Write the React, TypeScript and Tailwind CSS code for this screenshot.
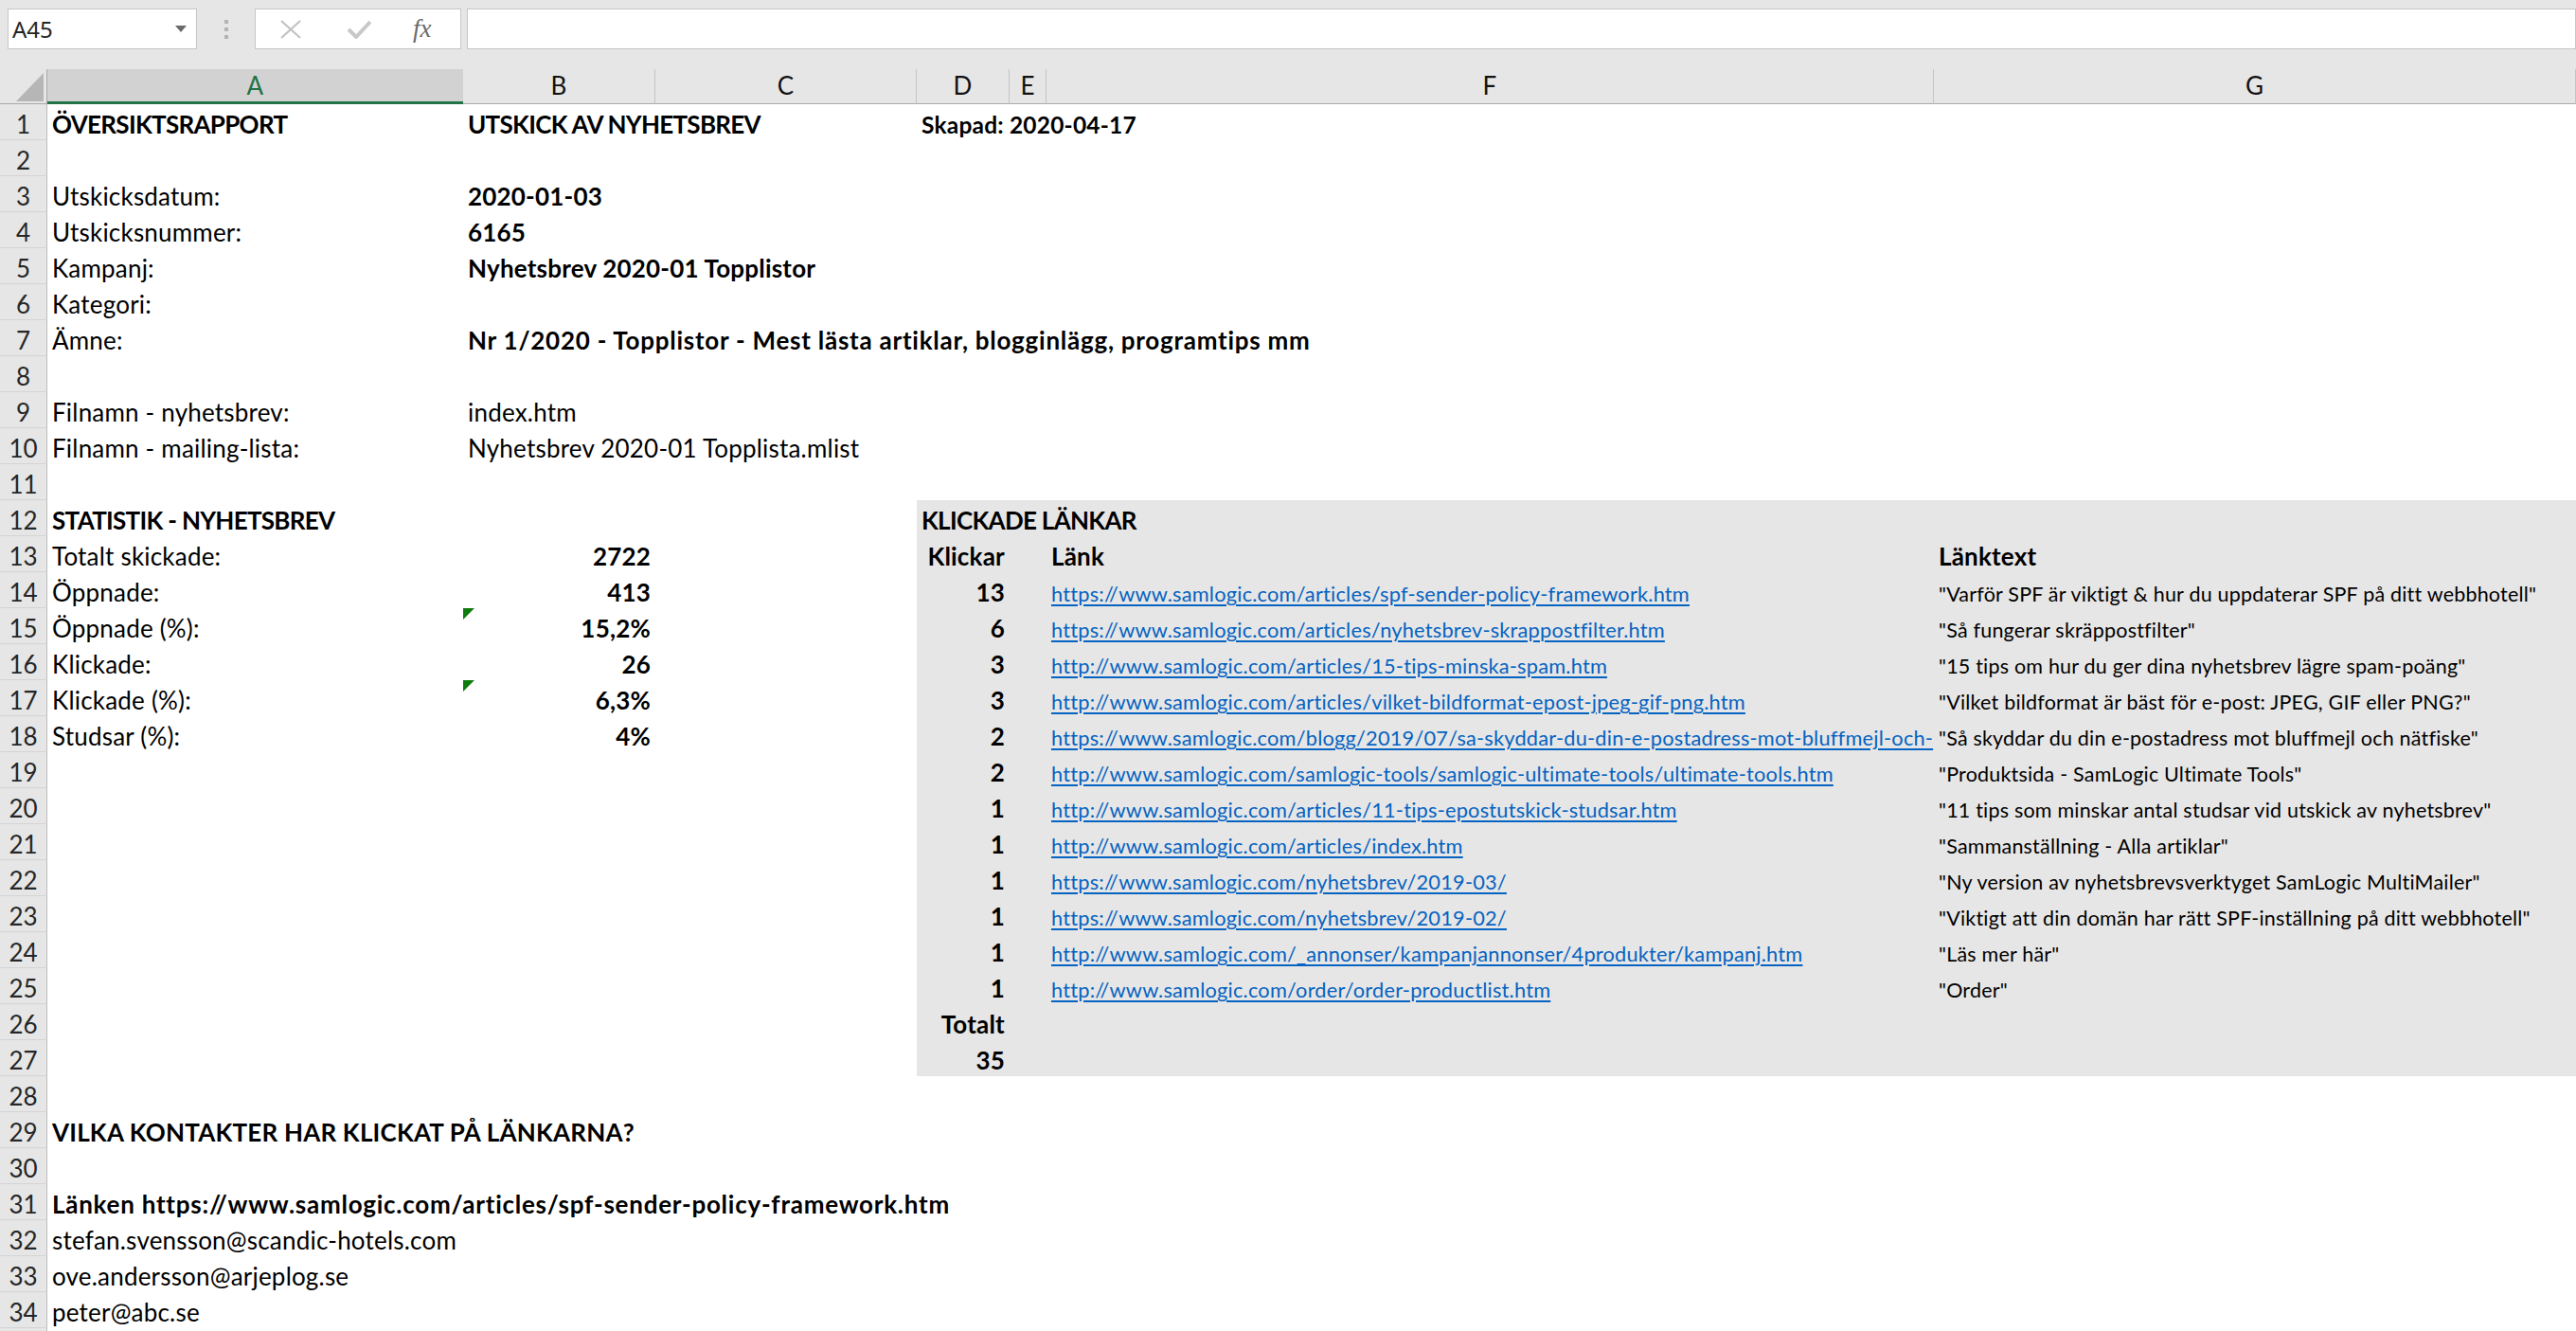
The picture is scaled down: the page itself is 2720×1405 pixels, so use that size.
import clsx from "clsx";

type C = { t: string; b?: boolean; r?: boolean; link?: boolean; sm?: boolean; xs?: boolean; caps?: boolean; wide?: boolean };
type R = { a?: C; b?: C; d?: C; f?: C; g?: C; gray?: boolean; mark?: boolean };

const links: [number, string, string][] = [
  [13, "https://www.samlogic.com/articles/spf-sender-policy-framework.htm", "Varför SPF är viktigt & hur du uppdaterar SPF på ditt webbhotell"],
  [6, "https://www.samlogic.com/articles/nyhetsbrev-skrappostfilter.htm", "Så fungerar skräppostfilter"],
  [3, "http://www.samlogic.com/articles/15-tips-minska-spam.htm", "15 tips om hur du ger dina nyhetsbrev lägre spam-poäng"],
  [3, "http://www.samlogic.com/articles/vilket-bildformat-epost-jpeg-gif-png.htm", "Vilket bildformat är bäst för e-post: JPEG, GIF eller PNG?"],
  [2, "https://www.samlogic.com/blogg/2019/07/sa-skyddar-du-din-e-postadress-mot-bluffmejl-och-", "Så skyddar du din e-postadress mot bluffmejl och nätfiske"],
  [2, "http://www.samlogic.com/samlogic-tools/samlogic-ultimate-tools/ultimate-tools.htm", "Produktsida - SamLogic Ultimate Tools"],
  [1, "http://www.samlogic.com/articles/11-tips-epostutskick-studsar.htm", "11 tips som minskar antal studsar vid utskick av nyhetsbrev"],
  [1, "http://www.samlogic.com/articles/index.htm", "Sammanställning - Alla artiklar"],
  [1, "https://www.samlogic.com/nyhetsbrev/2019-03/", "Ny version av nyhetsbrevsverktyget SamLogic MultiMailer"],
  [1, "https://www.samlogic.com/nyhetsbrev/2019-02/", "Viktigt att din domän har rätt SPF-inställning på ditt webbhotell"],
  [1, "http://www.samlogic.com/_annonser/kampanjannonser/4produkter/kampanj.htm", "Läs mer här"],
  [1, "http://www.samlogic.com/order/order-productlist.htm", "Order"],
];

const stats: [string, string, boolean][] = [
  ["Totalt skickade:", "2722", false],
  ["Öppnade:", "413", false],
  ["Öppnade (%):", "15,2%", true],
  ["Klickade:", "26", false],
  ["Klickade (%):", "6,3%", true],
  ["Studsar (%):", "4%", false],
];

const rows: R[] = [
  {
    a: { t: "ÖVERSIKTSRAPPORT", b: true, caps: true },
    b: { t: "UTSKICK AV NYHETSBREV", b: true, caps: true },
    d: { t: "Skapad: 2020-04-17", b: true, sm: true },
  },
  {},
  { a: { t: "Utskicksdatum:" }, b: { t: "2020-01-03", b: true } },
  { a: { t: "Utskicksnummer:" }, b: { t: "6165", b: true } },
  { a: { t: "Kampanj:" }, b: { t: "Nyhetsbrev 2020-01 Topplistor", b: true } },
  { a: { t: "Kategori:" } },
  { a: { t: "Ämne:" }, b: { t: "Nr 1/2020 - Topplistor - Mest lästa artiklar, blogginlägg, programtips mm", b: true, wide: true } },
  {},
  { a: { t: "Filnamn - nyhetsbrev:" }, b: { t: "index.htm" } },
  { a: { t: "Filnamn - mailing-lista:" }, b: { t: "Nyhetsbrev 2020-01 Topplista.mlist" } },
  {},
  { a: { t: "STATISTIK - NYHETSBREV", b: true, caps: true }, d: { t: "KLICKADE LÄNKAR", b: true, caps: true }, gray: true },
];

// rows 13-27: stats on the left, clicked links on the right
const right: R[] = [
  { d: { t: "Klickar", b: true, r: true }, f: { t: "Länk", b: true }, g: { t: "Länktext", b: true } },
  ...links.map(([n, url, text]) => ({
    d: { t: String(n), b: true, r: true },
    f: { t: url, link: true },
    g: { t: `"${text}"`, xs: true },
  })),
  { d: { t: "Totalt", b: true, r: true } },
  { d: { t: "35", b: true, r: true } },
];
right.forEach((r, i) => {
  const s = stats[i];
  rows.push({
    ...r,
    a: s ? { t: s[0] } : undefined,
    b: s ? { t: s[1], b: true, r: true } : undefined,
    mark: s ? s[2] : false,
    gray: true,
  });
});

rows.push(
  {},
  { a: { t: "VILKA KONTAKTER HAR KLICKAT PÅ LÄNKARNA?", b: true } },
  {},
  { a: { t: "Länken https://www.samlogic.com/articles/spf-sender-policy-framework.htm", b: true, wide: true } },
  { a: { t: "stefan.svensson@scandic-hotels.com" } },
  { a: { t: "ove.andersson@arjeplog.se" } },
  { a: { t: "peter@abc.se" } },
  {},
  {}
);

function Cell({ c, w, gray, clip, mark }: { c?: C; w: string; gray?: boolean; clip?: boolean; mark?: boolean }) {
  return (
    <div
      className={clsx(
        "relative h-full shrink-0 whitespace-nowrap px-[5px]",
        w,
        gray && "bg-[#e7e6e6]",
        clip && "overflow-hidden",
        c?.r && "text-right"
      )}
    >
      {mark && <span className="absolute left-0 top-0 h-[12px] w-[12px] bg-[#0f7b0f] [clip-path:polygon(0_0,100%_0,0_100%)]" />}
      {c && (
        <span
          className={clsx(
            "relative top-[2px] z-10",
            c.b && "font-bold",
            c.caps && "tracking-[-0.7px]",
            c.wide && "tracking-[0.75px]",
            c.sm && "text-[24.5px]",
            c.xs && "text-[21.5px]",
            c.link && "text-[21.8px] text-[#0563c1] underline decoration-[#0563c1] decoration-[2px] underline-offset-[3px]"
          )}
        >
          {c.t}
        </span>
      )}
    </div>
  );
}

function Toolbar() {
  return (
    <div className="flex h-[73px] items-start bg-[#e6e6e6] pt-[9px] tracking-normal">
      <div className="ml-[8px] flex h-[43px] w-[200px] items-center border border-[#c6c6c6] bg-white pl-[4px] pr-[10px]">
        <span className="flex-1 font-['Noto_Sans',sans-serif] text-[24px] leading-none text-[#262626]">A45</span>
        <svg width="12" height="7" viewBox="0 0 12 7">
          <path d="M0 0h12L6 7z" fill="#6a6a6a" />
        </svg>
      </div>
      <div className="ml-[29px] mt-[12px] flex flex-col gap-[4px]">
        <span className="h-[4px] w-[4px] bg-[#b3b3b3]" />
        <span className="h-[4px] w-[4px] bg-[#b3b3b3]" />
        <span className="h-[4px] w-[4px] bg-[#b3b3b3]" />
      </div>
      <div className="ml-[28px] flex h-[43px] w-[218px] items-center border border-[#c6c6c6] bg-white">
        <svg className="ml-[26px]" width="22" height="20" viewBox="0 0 22 20">
          <path d="M1 1l20 18M21 1L1 19" stroke="#c2c2c2" strokeWidth="2.2" fill="none" />
        </svg>
        <svg className="ml-[49px]" width="25" height="20" viewBox="0 0 25 20">
          <path d="M1 10l8 8L24 2" stroke="#c8c8c8" strokeWidth="4" fill="none" />
        </svg>
        <span className="ml-[44px] font-['Liberation_Serif',serif] text-[27px] italic leading-none text-[#6b6b6b]">fx</span>
      </div>
      <div className="ml-[6px] h-[43px] flex-1 border border-[#c6c6c6] bg-white" />
    </div>
  );
}

const headers: [string, string][] = [
  ["A", "w-[439px]"],
  ["B", "w-[203px]"],
  ["C", "w-[276px]"],
  ["D", "w-[98px]"],
  ["E", "w-[39px]"],
  ["F", "w-[937px]"],
  ["G", "flex-1"],
];

function ColumnHeader() {
  return (
    <div className="flex h-[37px] bg-[#e6e6e6] leading-[35px]">
      <div className="relative w-[50px] shrink-0 border-b border-r border-[#a9a9a9]">
        <svg className="absolute left-0 top-0" width="50" height="37" viewBox="0 0 50 37">
          <path d="M46 4v30H17z" fill="#b6b6b6" />
        </svg>
      </div>
      {headers.map(([l, w]) =>
        l === "A" ? (
          <div key={l} className={clsx("shrink-0 border-b-[3px] border-[#217346] bg-[#d2d2d2] text-center text-[#217346]", w)}>
            {l}
          </div>
        ) : (
          <div key={l} className={clsx("shrink-0 border-b border-r border-b-[#a9a9a9] border-r-[#c4c4c4] text-center text-[#111]", w)}>
            {l}
          </div>
        )
      )}
    </div>
  );
}

export default function App() {
  return (
    <div className="h-[1405px] w-[2720px] overflow-hidden bg-white font-['Lato','Liberation_Sans',sans-serif] text-[26px] tracking-[0.2px] text-black">
      <Toolbar />
      <ColumnHeader />
      {rows.map((r, i) => (
        <div key={i} className="flex h-[38px] leading-[38px]">
          <div className="w-[50px] shrink-0 border-b border-r border-b-[#d4d4d4] border-r-[#bdbdbd] bg-[#e6e6e6] pt-[2px] text-center tracking-normal text-[#262626]">
            {i + 1}
          </div>
          <Cell c={r.a} w="w-[439px]" />
          <Cell c={r.b} w="w-[203px]" mark={r.mark} />
          <Cell c={undefined} w="w-[276px]" />
          <Cell c={r.d} w="w-[98px]" gray={r.gray} />
          <Cell c={undefined} w="w-[39px]" gray={r.gray} />
          <Cell c={r.f} w="w-[937px]" gray={r.gray} clip />
          <Cell c={r.g} w="flex-1" gray={r.gray} />
        </div>
      ))}
    </div>
  );
}
